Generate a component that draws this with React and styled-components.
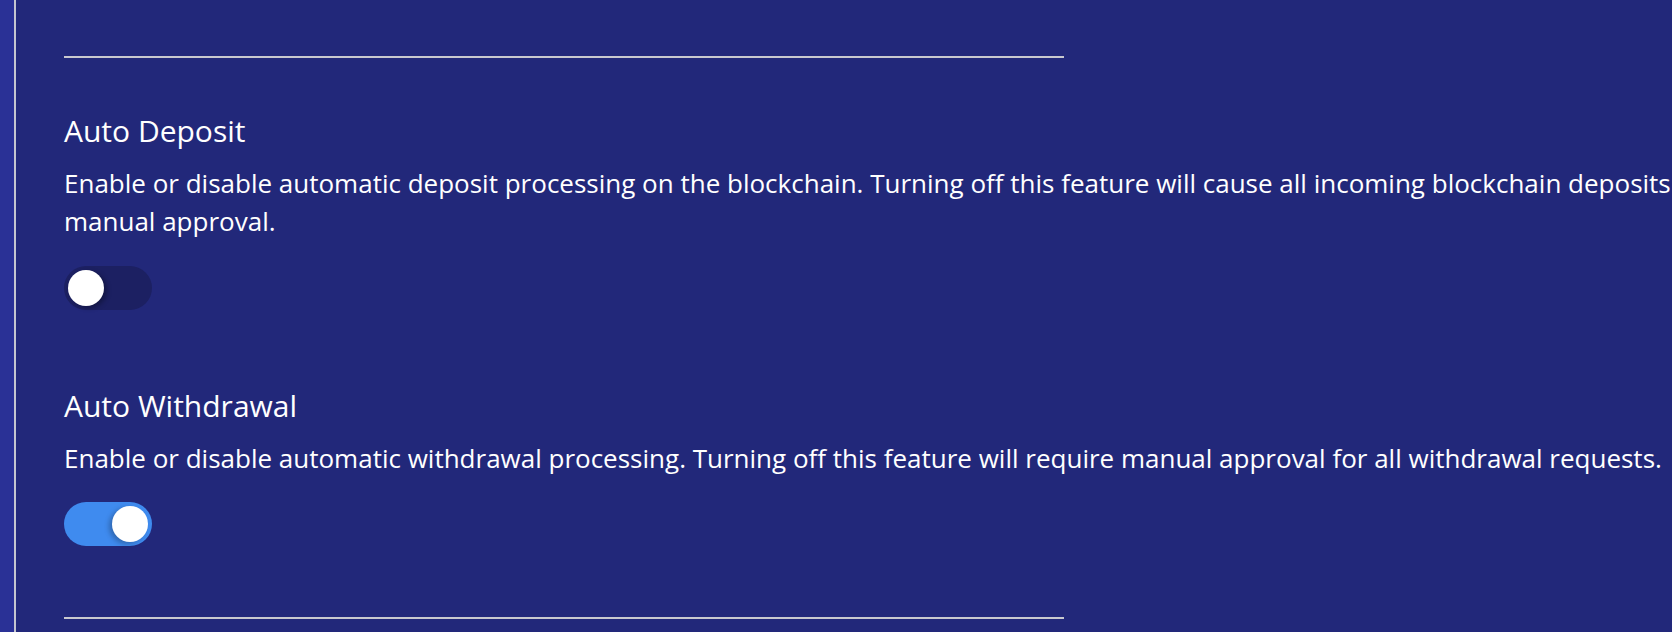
import React, { useState } from 'react';
import styled, { createGlobalStyle } from 'styled-components';

const GlobalStyle = createGlobalStyle`
  html, body {
    margin: 0;
    padding: 0;
    height: 100%;
    overflow: hidden;
    background: #22287a;
  }
  body {
    font-family: "Open Sans", "Noto Sans", sans-serif;
    color: #ffffff;
    -webkit-font-smoothing: antialiased;
  }
`;

const Page = styled.div`
  display: flex;
  min-height: 632px;
  background: #22287a;
`;

const Rail = styled.aside`
  flex: 0 0 14px;
  background: #2a3196;
  border-right: 2px solid #c4c5cf;
`;

const Main = styled.main`
  flex: 1;
  padding: 56px 0 0 48px;
`;

const Divider = styled.hr`
  width: 1000px;
  height: 2px;
  margin: 0;
  border: none;
  background: #c9c9cf;
`;

const SettingsList = styled.div`
  display: flex;
  flex-direction: column;
  gap: 76px;
  padding: 53px 0 71px;
`;

const Setting = styled.section`
  display: flex;
  flex-direction: column;
  align-items: flex-start;
`;

const Title = styled.h3`
  margin: 0;
  padding-top: 2px;
  font-size: 30px;
  font-weight: 400;
  line-height: 36px;
`;

const Description = styled.p`
  width: 1800px;
  margin: 15px 0 25px;
  font-size: 26px;
  line-height: 38.4px;
`;

const Track = styled.button`
  position: relative;
  width: 88px;
  height: 44px;
  padding: 0;
  border: none;
  border-radius: 22px;
  cursor: pointer;
  background: ${({ $on }) => ($on ? '#3f8bef' : '#1c2062')};
  transition: background 0.2s;
`;

const Knob = styled.span`
  position: absolute;
  top: 4px;
  left: ${({ $on }) => ($on ? '48px' : '4px')};
  width: 36px;
  height: 36px;
  border-radius: 50%;
  background: #ffffff;
  box-shadow: ${({ $on }) =>
    $on ? '-3px 2px 5px rgba(0, 0, 0, 0.25)' : '3px 2px 5px rgba(0, 0, 0, 0.3)'};
  transition: left 0.2s;
`;

const Switch = ({ checked, onChange }) => (
  <Track role="switch" aria-checked={checked} $on={checked} onClick={() => onChange(!checked)}>
    <Knob $on={checked} />
  </Track>
);

const settings = [
  {
    key: 'deposit',
    title: 'Auto Deposit',
    text: 'Enable or disable automatic deposit processing on the blockchain. Turning off this feature will cause all incoming blockchain deposits to require manual approval.',
    initial: false
  },
  {
    key: 'withdrawal',
    title: 'Auto Withdrawal',
    text: 'Enable or disable automatic withdrawal processing. Turning off this feature will require manual approval for all withdrawal requests.',
    initial: true
  }
];

export default function App() {
  const [values, setValues] = useState(() =>
    Object.fromEntries(settings.map((s) => [s.key, s.initial]))
  );

  return (
    <>
      <GlobalStyle />
      <Page>
        <Rail />
        <Main>
          <Divider />
          <SettingsList>
            {settings.map((s) => (
              <Setting key={s.key}>
                <Title>{s.title}</Title>
                <Description>{s.text}</Description>
                <Switch
                  checked={values[s.key]}
                  onChange={(v) => setValues((prev) => ({ ...prev, [s.key]: v }))}
                />
              </Setting>
            ))}
          </SettingsList>
          <Divider />
        </Main>
      </Page>
    </>
  );
}
